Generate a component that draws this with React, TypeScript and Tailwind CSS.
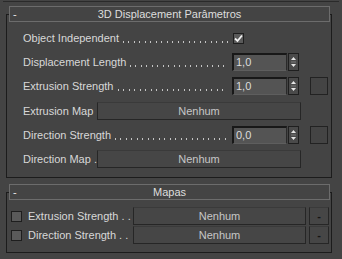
const Header = ({ title }: { title: string }) => (
  <div className="relative -mt-[9px] ml-[2px] flex h-[16px] w-[321px] items-center border border-[#6c6c6c] bg-[#444444]">
    <div className="w-[20px] pl-[3px] leading-none text-[#e8e8e8]">-</div>
    <div className="flex-1 text-center leading-none text-[#dedede]">{title}</div>
    <div className="w-[20px]" />
  </div>
);

// dotted leader drawn as a repeating background, 11px tile holding two dots
const Leader = () => (
  <div className="ml-[4px] mt-[8px] h-[2px] flex-1 bg-[linear-gradient(to_right,#c4c4c4_0_1px,transparent_1px_5px,#c4c4c4_5px_6px,transparent_6px)] bg-[length:11px_2px] bg-repeat-x" />
);

const Label = ({ text, width, dots = true }: { text: string; width: string; dots?: boolean }) => (
  <div className={`flex items-center whitespace-nowrap pr-[4px] ${width}`}>
    <span>{text}</span>
    {dots && <Leader />}
  </div>
);

const Check = ({ checked }: { checked?: boolean }) => (
  <div className="flex h-[11px] w-[11px] items-center justify-center border border-[#1e1e1e] bg-[#5a5a5a]">
    {checked && (
      <svg width="9" height="9" viewBox="0 0 9 9">
        <path d="M1 4.5 L3.5 7 L8 1.5" fill="none" stroke="#f2f2f2" strokeWidth="1.8" />
      </svg>
    )}
  </div>
);

const Spinner = ({ value }: { value: string }) => (
  <div className="flex items-center">
    <div className="flex h-[18px] w-[55px] items-center border-t-2 border-l-2 border-b border-r border-t-[#181818] border-l-[#181818] border-b-[#5e5e5e] border-r-[#2a2a2a] bg-[#545454] pl-[2px] text-[#dcdcdc]">
      {value}
    </div>
    <svg width="11" height="18" viewBox="0 0 11 18" className="ml-[1px]">
      <rect x="0.5" y="0.5" width="10" height="17" fill="#4a4a4a" stroke="#1f1f1f" />
      <path d="M3 7 L8 7 L5.5 4 Z" fill="#e6e6e6" />
      <line x1="3" y1="9" x2="8" y2="9" stroke="#7a7a7a" />
      <path d="M3 11 L8 11 L5.5 14 Z" fill="#e6e6e6" />
    </svg>
  </div>
);

const Swatch = () => <div className="ml-[11px] h-[18px] w-[18px] border border-[#222222] bg-[#444444]" />;

const MapButton = ({ width }: { width: string }) => (
  <div className={`flex h-[18px] items-center justify-center border border-[#262626] border-t-[#3a3a3a] bg-[#464646] text-[#c6c6c6] ${width}`}>
    Nenhum
  </div>
);

export default function App() {
  return (
    <div
      className="relative h-[259px] w-[342px] overflow-hidden bg-[#444444] text-[11px] text-[#d8d8d8]"
      style={{ fontFamily: '"Liberation Sans", Arial, sans-serif' }}
    >
      <div className="absolute left-[3px] right-[3px] top-[1px] h-[1px] bg-[#2a2a2a]" />

      {/* rollout 1 */}
      <div className="ml-[6px] mt-[14px] h-[164px] w-[326px] border border-[#1c1c1c]">
        <Header title="3D Displacement Parâmetros" />
        <div className="mt-[7px] flex flex-col gap-[6px] pl-[16px]">
          <div className="flex h-[18px] items-center">
            <Label text="Object Independent" width="w-[210px]" />
            <Check checked />
          </div>
          <div className="flex h-[18px] items-center">
            <Label text="Displacement Length" width="w-[209px]" />
            <Spinner value="1,0" />
          </div>
          <div className="flex h-[18px] items-center">
            <Label text="Extrusion Strength" width="w-[209px]" />
            <Spinner value="1,0" />
            <Swatch />
          </div>
          <div className="mt-[1px] flex h-[18px] items-center">
            <Label text="Extrusion Map" width="w-[74px]" dots={false} />
            <MapButton width="w-[204px]" />
          </div>
          <div className="flex h-[18px] items-center">
            <Label text="Direction Strength" width="w-[209px]" />
            <Spinner value="0,0" />
            <Swatch />
          </div>
          <div className="flex h-[18px] items-center">
            <Label text="Direction Map ." width="w-[74px]" dots={false} />
            <MapButton width="w-[204px]" />
          </div>
        </div>
      </div>

      {/* rollout 2 */}
      <div className="ml-[6px] mt-[14px] h-[61px] w-[326px] border border-[#1c1c1c]">
        <Header title="Mapas" />
        <div className="mt-[7px] flex flex-col gap-[1px] pl-[4px]">
          {["Extrusion Strength . .", "Direction Strength . ."].map((t) => (
            <div key={t} className="flex h-[18px] items-center">
              <Check />
              <div className="ml-[6px] w-[105px] whitespace-nowrap">{t}</div>
              <MapButton width="w-[173px]" />
              <div className="ml-[3px] flex h-[18px] w-[20px] items-center justify-center border border-[#262626] border-t-[#3a3a3a] bg-[#464646] font-bold text-[#151515]">
                -
              </div>
            </div>
          ))}
        </div>
      </div>
    </div>
  );
}
